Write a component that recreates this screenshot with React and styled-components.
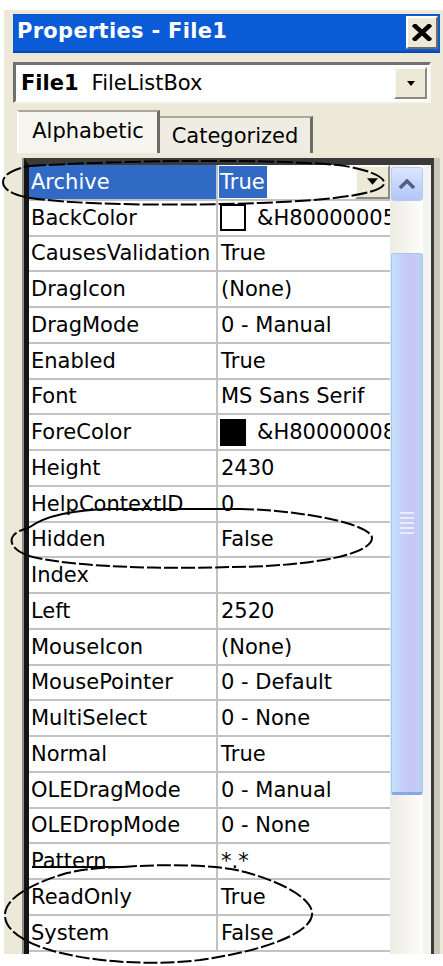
import React from 'react';
import styled, { createGlobalStyle } from 'styled-components';

const GlobalStyle = createGlobalStyle`
  html, body {
    margin: 0;
    padding: 0;
    background: #ffffff;
  }
  body {
    font-family: "DejaVu Sans", Verdana, sans-serif;
    font-size: 21px;
    color: #000;
  }
`;

const Page = styled.div`
  position: relative;
  width: 443px;
  height: 966px;
  overflow: hidden;
`;

const Window = styled.div`
  margin: 10px 0 0 4px;
  width: 439px;
  height: 944px;
  box-sizing: border-box;
  padding: 4px 3px 0 9px;
  background: #ece9d8;
  display: flex;
  flex-direction: column;
  overflow: hidden;
`;

const TitleBar = styled.div`
  flex: none;
  height: 39px;
  box-sizing: border-box;
  display: flex;
  align-items: center;
  justify-content: space-between;
  padding: 0 2px 0 4px;
  background: #0b5ad6;
  border-bottom: 2px solid #0846b4;
`;

const Title = styled.span`
  color: #fff;
  font-weight: bold;
  font-size: 21px;
  letter-spacing: 0.3px;
  margin-top: -3px;
`;

const CloseButton = styled.div`
  width: 32px;
  height: 33px;
  box-sizing: border-box;
  display: flex;
  align-items: center;
  justify-content: center;
  background: #ece9d8;
  border: 2px solid;
  border-color: #ffffff #6f6d62 #6f6d62 #ffffff;
`;

const Combo = styled.div`
  flex: none;
  height: 41px;
  margin: 9px 9px 0 0;
  box-sizing: border-box;
  display: flex;
  align-items: center;
  background: #fff;
  border-style: solid;
  border-width: 3px 2px 2px 3px;
  border-color: #717171 #f6f6f2 #f6f6f2 #717171;
  padding: 0 2px 0 5px;
`;

const ComboName = styled.span`
  font-weight: bold;
`;

const ComboType = styled.span`
  margin-left: 13px;
  flex: 1;
`;

const DropButton = styled.div`
  width: ${p => p.$w || 33}px;
  height: ${p => p.$h || 32}px;
  box-sizing: border-box;
  display: flex;
  align-items: center;
  justify-content: center;
  background: #ece9d8;
  border: 2px solid;
  border-color: #fbfbf8 #8c8a7c #8c8a7c #fbfbf8;
  flex: none;
`;

const Tabs = styled.div`
  flex: none;
  height: 43px;
  margin-top: 7px;
  padding-left: 4px;
  display: flex;
  align-items: flex-end;
`;

const Tab = styled.div`
  height: ${p => (p.$active ? 43 : 37)}px;
  width: ${p => p.$w}px;
  box-sizing: border-box;
  display: flex;
  align-items: center;
  justify-content: center;
  padding-bottom: ${p => (p.$active ? 4 : 0)}px;
  background: ${p => (p.$active ? '#f6f5ef' : '#efede3')};
  border-style: solid;
  border-width: 2px 3px 0 ${p => (p.$active ? 2 : 0)}px;
  border-color: #a9a89b #6e6d63 transparent #ffffff;
`;

const GridFrame = styled.div`
  flex: 1;
  margin: 5px 6px 0 11px;
  display: flex;
  border-top: 7px solid #3a3a3a;
  border-left: 5px solid #141414;
  border-right: 3px solid #3b3b3b;
  box-shadow: -2px 0 0 #8d8d8d, 6px 0 0 #cac8b8;
  background: #fff;
  overflow: hidden;
`;

const Rows = styled.div`
  width: 361px;
  flex: none;
`;

const Row = styled.div`
  height: 35.76px;
  box-sizing: border-box;
  display: flex;
  border-bottom: 2px solid #c2c2c2;
  white-space: nowrap;
`;

const LabelCell = styled.div`
  width: 189px;
  flex: none;
  box-sizing: border-box;
  display: flex;
  align-items: center;
  padding-left: 2px;
  border-right: 2px solid #c2c2c2;
  background: ${p => (p.$selected ? '#316ac5' : '#fff')};
  color: ${p => (p.$selected ? '#fff' : '#000')};
  overflow: hidden;
`;

const ValueCell = styled.div`
  flex: 1;
  min-width: 0;
  display: flex;
  align-items: center;
  padding-left: 3px;
  overflow: hidden;
`;

const Highlight = styled.span`
  background: #316ac5;
  color: #fff;
  padding: 4px 2px 4px 1px;
  margin-left: -2px;
`;

const Spacer = styled.div`
  flex: 1;
`;

const Swatch = styled.span`
  flex: none;
  width: 26px;
  height: 27px;
  box-sizing: border-box;
  margin: 0 11px 0 -1px;
  border: 2px solid #000;
  background: ${p => p.$color};
`;

const ScrollBar = styled.div`
  width: 33px;
  flex: none;
  display: flex;
  flex-direction: column;
  background: linear-gradient(90deg, #ecebe4 0%, #f3f2ec 40%, #fefefb 100%);
`;

const UpButton = styled.div`
  height: 34px;
  margin: 2px 0 0 1px;
  box-sizing: border-box;
  display: flex;
  align-items: center;
  justify-content: center;
  border-radius: 3px;
  border: 1px solid #b9cbf4;
  background: linear-gradient(180deg, #dce6fe 0%, #c3d3fc 55%, #b3c6f8 100%);
`;

const Track = styled.div`
  flex: 1;
  padding-top: 52px;
`;

const Thumb = styled.div`
  height: 542px;
  margin-left: 1px;
  box-sizing: border-box;
  display: flex;
  align-items: center;
  justify-content: center;
  border-radius: 3px;
  border: 1px solid #a9c4f0;
  border-bottom: 3px solid #86a8e6;
  background: linear-gradient(90deg, #c2e2fb 0%, #c4d0fa 30%, #c8c5f7 65%, #c4cdf5 88%, #a9d8de 100%);
`;

const Grip = styled.div`
  width: 14px;
  height: 22px;
  background: repeating-linear-gradient(180deg, #e8eefe 0 2px, transparent 2px 5px);
`;

const EdgeStrip = styled.div`
  width: 8px;
  flex: none;
  background: #f3f3ef;
`;

const Annotations = styled.svg`
  position: absolute;
  left: 0;
  top: 0;
  pointer-events: none;
`;

const properties = [
  ['Archive', 'True'],
  ['BackColor', '&H80000005', '#ffffff'],
  ['CausesValidation', 'True'],
  ['DragIcon', '(None)'],
  ['DragMode', '0 - Manual'],
  ['Enabled', 'True'],
  ['Font', 'MS Sans Serif'],
  ['ForeColor', '&H80000008', '#000000'],
  ['Height', '2430'],
  ['HelpContextID', '0'],
  ['Hidden', 'False'],
  ['Index', ''],
  ['Left', '2520'],
  ['MouseIcon', '(None)'],
  ['MousePointer', '0 - Default'],
  ['MultiSelect', '0 - None'],
  ['Normal', 'True'],
  ['OLEDragMode', '0 - Manual'],
  ['OLEDropMode', '0 - None'],
  ['Pattern', '*.*'],
  ['ReadOnly', 'True'],
  ['System', 'False'],
];

const DownArrow = ({ w = 10, h = 6 }) => (
  <svg width={w} height={h} viewBox="0 0 10 6">
    <path d="M0 0 H10 L5 6 Z" fill="#000" />
  </svg>
);

function PropertyRow({ name, value, color, selected }) {
  return (
    <Row>
      <LabelCell $selected={selected}>{name}</LabelCell>
      <ValueCell>
        {selected ? (
          <>
            <Highlight>{value}</Highlight>
            <Spacer />
            <DropButton $w={35} $h={34}>
              <DownArrow w={11} h={7} />
            </DropButton>
          </>
        ) : (
          <>
            {color && <Swatch $color={color} />}
            {value}
          </>
        )}
      </ValueCell>
    </Row>
  );
}

export default function App() {
  return (
    <Page>
      <GlobalStyle />
      <Window>
        <TitleBar>
          <Title>Properties - File1</Title>
          <CloseButton>
            <svg width="20" height="17" viewBox="0 0 20 17">
              <path d="M3 2 L17 15 M17 2 L3 15" stroke="#000" strokeWidth="4.5" strokeLinecap="square" />
            </svg>
          </CloseButton>
        </TitleBar>

        <Combo>
          <ComboName>File1</ComboName>
          <ComboType>FileListBox</ComboType>
          <DropButton>
            <DownArrow w={8} h={5} />
          </DropButton>
        </Combo>

        <Tabs>
          <Tab $active $w={143}>Alphabetic</Tab>
          <Tab $w={153}>Categorized</Tab>
        </Tabs>

        <GridFrame>
          <Rows>
            {properties.map(([name, value, color], i) => (
              <PropertyRow key={name} name={name} value={value} color={color} selected={i === 0} />
            ))}
          </Rows>
          <ScrollBar>
            <UpButton>
              <svg width="18" height="11" viewBox="0 0 18 11">
                <path d="M2 9 L9 2 L16 9" fill="none" stroke="#4d6185" strokeWidth="3.5" />
              </svg>
            </UpButton>
            <Track>
              <Thumb>
                <Grip />
              </Thumb>
            </Track>
          </ScrollBar>
          <EdgeStrip />
        </GridFrame>
      </Window>

      <Annotations width="443" height="966" viewBox="0 0 443 966">
        <g fill="none" stroke="#000" strokeWidth="2">
          <path
            d="M30 166 C110 161 260 158 338 165 C368 169 386 177 384 184 C381 193 340 200 260 203 C170 206 80 205 30 198 C12 195 3 189 3 182 C3 175 13 169 30 166"
            strokeDasharray="16 3"
          />
          <path d="M30 527 C45 516 70 510 110 509 L240 509" />
          <path
            d="M240 509 C300 510 372 524 372 538 C372 553 320 566 233 567 C170 569 80 568 33 557 C15 552 10 544 12 538 C14 532 22 530 30 527"
            strokeDasharray="14 3"
          />
          <path d="M32 867 L123 867" />
          <path
            d="M123 867 C160 864 215 864 245 872 C285 883 314 900 312 915 C310 932 270 950 200 960 C150 966 90 962 50 950 C20 941 4 928 5 914 C6 898 30 884 67 873 C85 869 105 867 123 867"
            strokeDasharray="14 3"
          />
        </g>
      </Annotations>
    </Page>
  );
}
